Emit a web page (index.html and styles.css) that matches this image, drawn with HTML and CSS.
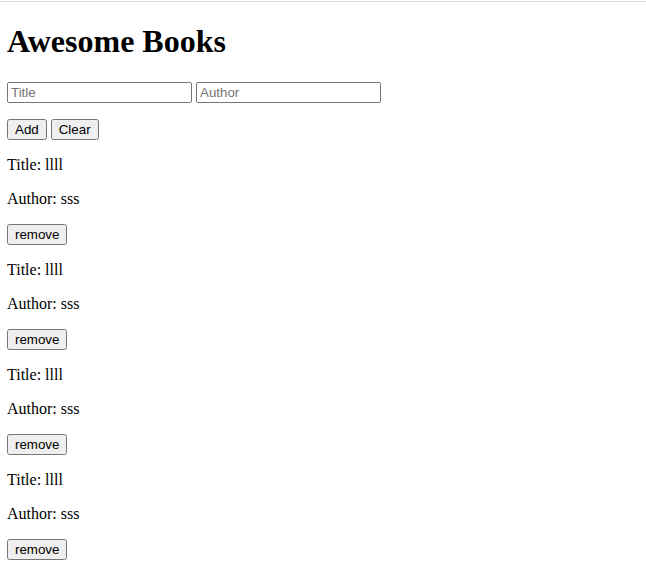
FILE: index.html
```html
<!DOCTYPE html>
<html>
<head>
<meta charset="utf-8">
<title>Awesome Books</title>
<link rel="stylesheet" href="styles.css">
</head>
<body>
<div class="topline"></div>
<h1 class="title">Awesome Books</h1>
<form class="form">
<input type="text" placeholder="Title">
<input type="text" placeholder="Author">
<p><button type="button">Add</button> <button type="button">Clear</button></p>
</form>
<div class="books">
<p>Title: llll</p>
<p>Author: sss</p>
<button type="button">remove</button>
<p>Title: llll</p>
<p>Author: sss</p>
<button type="button">remove</button>
<p>Title: llll</p>
<p>Author: sss</p>
<button type="button">remove</button>
<p>Title: llll</p>
<p>Author: sss</p>
<button type="button">remove</button>
</div>
</body>
</html>
```
FILE: styles.css
```css
body {
  font-family: "Liberation Serif", serif;
  margin: 0;
  padding: 1px 7px 0;
}
.topline {
  height: 1px;
  background: #dddddd;
  margin: 0 -7px;
}
input, button {
  font-family: "Liberation Sans", Arial, sans-serif;
}
```
